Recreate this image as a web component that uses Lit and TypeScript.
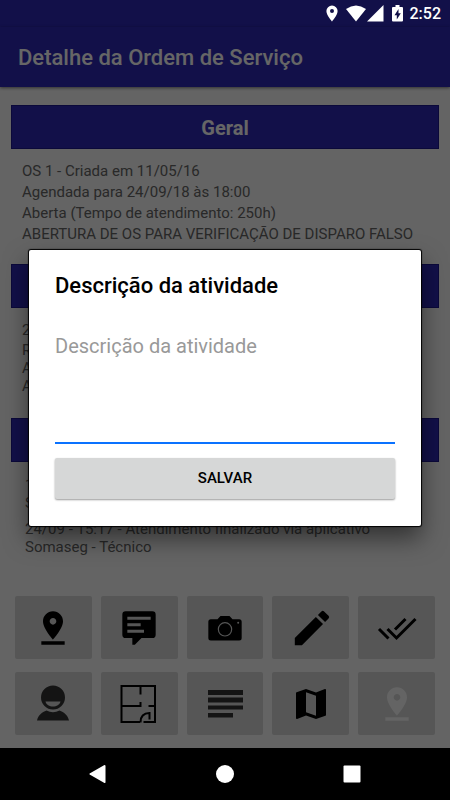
import { LitElement, html, css, svg } from "lit";
import { customElement, property } from "lit/decorators.js";

const pinDrop = svg`<svg viewBox="0 0 24 24"><path d="M18 8c0-3.31-2.69-6-6-6S6 4.69 6 8c0 4.5 6 11 6 11s6-6.500 6-11zm-8 0c0-1.100.9-2 2-2s2 .9 2 2-.89 2-2 2c-1.100 0-2-.9-2-2zM5 20v2h14v-2H5z"/></svg>`;

const actions = [
  { label: "Local", icon: pinDrop },
  {
    label: "Comentário",
    icon: svg`<svg viewBox="0 0 24 24"><path fill-rule="evenodd" d="M4 2h16a2 2 0 0 1 2 2v12a2 2 0 0 1-2 2h-6.500l-4 4H8v-4H4a2 2 0 0 1-2-2V4a2 2 0 0 1 2-2zM5 5.200V7h14V5.200zM5 9.100V11h8V9.100zM5 13v1.900h10V13z"/></svg>`,
  },
  {
    label: "Foto",
    icon: svg`<svg viewBox="0 0 24 24"><path d="M3.500 6.800h4L9.300 4.800h5.400l1.800 2h4A1.500 1.500 0 0 1 22 8.300v9.700a1.500 1.500 0 0 1-1.500 1.500h-17A1.500 1.500 0 0 1 2 18V8.300a1.500 1.500 0 0 1 1.500-1.500z"/><circle class="cut" cx="12" cy="12.800" r="4"/><circle class="dot" cx="19.900" cy="8.900" r=".6"/></svg>`,
  },
  {
    label: "Editar",
    icon: svg`<svg viewBox="1 1.500 21 21"><path d="M3 17.250V21h3.750L17.810 9.940l-3.750-3.750L3 17.250zM20.710 7.040a1 1 0 0 0 0-1.410l-2.340-2.340a1 1 0 0 0-1.410 0l-1.830 1.830 3.750 3.750 1.830-1.830z"/></svg>`,
  },
  {
    label: "Finalizar",
    icon: svg`<svg viewBox="0 0 40 40"><path class="line thick" d="M2 21l9.500 9.500M10.500 21l9 9L38.500 11M28.500 11L18 21.500"/></svg>`,
  },
  {
    label: "Cliente",
    soft: true,
    icon: svg`<svg viewBox="0 0 40 40"><path fill-rule="evenodd" d="M20 1.500a12 12 0 1 0 0 24 12 12 0 1 0 0-24zM12.500 17.500h15c-.8 3.200-4 5-7.500 5s-6.700-1.800-7.500-5z"/><path d="M4 36.500C5 31.500 9 28 13.500 26.500Q20 29.800 26.500 26.500C31 28 35 31.500 36 36.500z"/></svg>`,
  },
  {
    label: "Planta",
    icon: svg`<svg viewBox="0 0 40 40"><path class="line" d="M21 38H2.500V2H36v36H24.500M21.500 2v8.500M2.500 22h19v-4M29.500 22H36M21.500 38.500c0-6 3-9.500 9-9.500v6.500"/></svg>`,
  },
  {
    label: "Lista",
    soft: true,
    icon: svg`<svg viewBox="0 0 40 40"><path d="M3 6h35v5H3zM3 13.500h35v5H3zM3 21.500h35v4H3zM3 29h25v4.500H3z"/></svg>`,
  },
  {
    label: "Mapa",
    icon: svg`<svg viewBox="0 0 24 24"><path d="M20.500 3l-.16.030L15 5.100 9 3 3.360 4.900c-.21.070-.36.250-.36.480V20.500c0 .28.220.5.500.5l.16-.030L9 18.900l6 2.100 5.640-1.900c.21-.070.360-.25.360-.48V3.500c0-.28-.22-.5-.5-.5zM15 19l-6-2.110V5l6 2.110V19z"/></svg>`,
  },
  { label: "Local de saída", icon: pinDrop, disabled: true },
];

@customElement("status-bar")
class StatusBar extends LitElement {
  static styles = css`
    :host {
      display: flex;
      justify-content: flex-end;
      align-items: center;
      height: 27px;
      padding-right: 9px;
      background: #121049;
      color: #fff;
      font: 500 16px/27px Roboto, sans-serif;
    }
    svg {
      fill: currentColor;
      height: 17px;
    }
    .pin { width: 12px; margin-right: 8px; }
    .wifi { width: 20px; margin-right: 1px; }
    .cell { width: 17px; margin-right: 8px; }
    .battery { width: 11px; margin-right: 7px; }
  `;
  render() {
    return html`
      <svg class="pin" viewBox="0 0 12 17"><path fill-rule="evenodd" d="M6 .5A5.600 5.600 0 0 0 .4 6.100C.4 10.300 6 16.500 6 16.500s5.600-6.200 5.600-10.400A5.600 5.600 0 0 0 6 .5zM6 4.100a2 2 0 1 1 0 4 2 2 0 0 1 0-4z"/></svg>
      <svg class="wifi" viewBox="0 0 20 17"><path d="M0 4Q10-3 20 4L10 16.500z"/></svg>
      <svg class="cell" viewBox="0 0 17 17"><path d="M0 16.500L16.500 0v16.500z"/></svg>
      <svg class="battery" viewBox="0 0 11 17"><path fill-rule="evenodd" d="M3.500 0h4v2H10a1 1 0 0 1 1 1v12.500a1 1 0 0 1-1 1H1a1 1 0 0 1-1-1V3a1 1 0 0 1 1-1h2.500zM6.500 4L2.500 10.200h2.300v4.300l4-6.200H6.500z"/></svg>
      <span>2:52</span>
    `;
  }
}

@customElement("info-section")
class InfoSection extends LitElement {
  @property() heading = "";
  static styles = css`
    :host { display: block; }
    h2 {
      margin: 0;
      height: 42px;
      border: 1px solid #1d1791;
      background: #2d28b6;
      color: #fff;
      text-align: center;
      font: 700 20px/44px Roboto, sans-serif;
    }
  `;
  render() {
    return html`<h2>${this.heading}</h2><slot></slot>`;
  }
}

@customElement("activity-dialog")
class ActivityDialog extends LitElement {
  static styles = css`
    :host {
      display: block;
      box-sizing: border-box;
      width: 100%;
      padding: 22px 26px 27px;
      border-radius: 2px;
      background: #fff;
      box-shadow: 0 0 1px 1px #000, 0 12px 24px rgba(0, 0, 0, 0.5);
      font-family: Roboto, sans-serif;
    }
    label {
      display: block;
      color: #000;
      font-size: 22px;
      font-weight: 500;
      line-height: 28px;
    }
    textarea {
      display: block;
      box-sizing: border-box;
      width: 100%;
      height: 112px;
      margin: 32px 0 14px;
      padding: 0;
      border: 0;
      border-bottom: 2px solid #0a72ff;
      outline: 0;
      resize: none;
      background: none;
      color: #000;
      font: 20px/28px Roboto, sans-serif;
    }
    textarea::placeholder { color: #999; opacity: 1; }
    button {
      display: block;
      width: 100%;
      height: 41px;
      padding: 0;
      border: 0;
      border-radius: 2px;
      background: #d6d7d7;
      box-shadow: 0 1px 2px rgba(0, 0, 0, 0.4);
      color: #000;
      font: 500 15px/41px Roboto, sans-serif;
    }
  `;
  render() {
    return html`
      <label for="description">Descrição da atividade</label>
      <textarea id="description" placeholder="Descrição da atividade"></textarea>
      <button type="button">SALVAR</button>
    `;
  }
}

@customElement("app-root")
class AppRoot extends LitElement {
  static styles = css`
    :host {
      display: flex;
      flex-direction: column;
      min-height: 100vh;
      background: #fafafa;
      font-family: Roboto, sans-serif;
    }
    .screen {
      position: relative;
      flex: 1;
      display: flex;
      flex-direction: column;
    }
    .bar {
      height: 60px;
      padding: 0 18px;
      background: #2d28b6;
      box-shadow: 0 1px 3px rgba(0, 0, 0, 0.5);
    }
    h1 {
      margin: 0;
      color: #fff;
      font-size: 22px;
      font-weight: 500;
      line-height: 62px;
    }
    main {
      flex: 1;
      display: flex;
      flex-direction: column;
      padding: 18px 11px 13px;
      color: #666;
      font-size: 15px;
    }
    p { margin: 0; line-height: 18px; }
    .text { padding: 12px 11px 19px; }
    .text.loose { padding-right: 0; }
    .loose p, .text p:first-child { line-height: 21px; }
    .text.tall { padding-bottom: 23px; }
    .log { padding: 14px 14px 34px; }
    .log p:nth-child(3) { margin-top: 8px; }
    .grid {
      display: grid;
      grid-template-columns: repeat(5, 1fr);
      gap: 13px 9px;
      margin: auto 4px 0;
    }
    .grid button {
      display: flex;
      align-items: center;
      justify-content: center;
      height: 63px;
      padding: 0;
      border: 0;
      border-radius: 2px;
      background: #d6d7d7;
      color: #000;
    }
    .grid button.soft { color: #343434; }
    .grid button:disabled { color: #fafafa; }
    .grid svg {
      width: 40px;
      height: 40px;
      fill: currentColor;
    }
    .grid .line {
      fill: none;
      stroke: currentColor;
      stroke-width: 2;
    }
    .grid .thick { stroke-width: 3; }
    .grid .cut { fill: none; stroke: #d6d7d7; stroke-width: 0.7; }
    .grid .dot { fill: #d6d7d7; }
    .scrim {
      position: absolute;
      inset: 0;
      display: flex;
      align-items: center;
      padding: 0 29px;
      background: rgba(0, 0, 0, 0.6);
    }
    nav {
      display: flex;
      justify-content: space-around;
      align-items: center;
      height: 52px;
      padding: 0 35px;
      background: #000;
    }
    nav button {
      display: flex;
      padding: 0;
      border: 0;
      background: none;
      color: #fff;
    }
    nav svg { width: 18px; height: 18px; fill: currentColor; }
  `;

  render() {
    return html`
      <status-bar></status-bar>
      <div class="screen">
        <header class="bar"><h1>Detalhe da Ordem de Serviço</h1></header>
        <main>
          <info-section heading="Geral">
            <div class="text loose">
              <p>OS 1 - Criada em 11/05/16</p>
              <p>Agendada para 24/09/18 às 18:00</p>
              <p>Aberta (Tempo de atendimento: 250h)</p>
              <p>ABERTURA DE OS PARA VERIFICAÇÃO DE DISPARO FALSO</p>
            </div>
          </info-section>
          <info-section>
            <div class="text tall">
              <p>2</p>
              <p>R</p>
              <p>A</p>
              <p>A</p>
            </div>
          </info-section>
          <info-section>
            <div class="log">
              <p>1</p>
              <p>S</p>
              <p>24/09 - 15:17 - Atendimento finalizado via aplicativo</p>
              <p>Somaseg - Técnico</p>
            </div>
          </info-section>
          <div class="grid">
            ${actions.map(
              (a) => html`<button
                type="button"
                class=${a.soft ? "soft" : ""}
                aria-label=${a.label}
                ?disabled=${a.disabled}
              >${a.icon}</button>`
            )}
          </div>
        </main>
        <div class="scrim">
          <activity-dialog role="dialog" aria-label="Descrição da atividade"></activity-dialog>
        </div>
      </div>
      <nav>
        <button type="button" aria-label="Voltar">
          <svg viewBox="0 0 18 18"><path d="M15.500 0a1 1 0 0 1 1 1v16a1 1 0 0 1-1.500.8L1.500 10a1 1 0 0 1 0-2L15 .2z"/></svg>
        </button>
        <button type="button" aria-label="Início">
          <svg viewBox="0 0 18 18"><circle cx="9" cy="9" r="9"/></svg>
        </button>
        <button type="button" aria-label="Recentes">
          <svg viewBox="0 0 18 18"><rect x=".5" y=".5" width="17" height="17" rx="1"/></svg>
        </button>
      </nav>
    `;
  }
}
